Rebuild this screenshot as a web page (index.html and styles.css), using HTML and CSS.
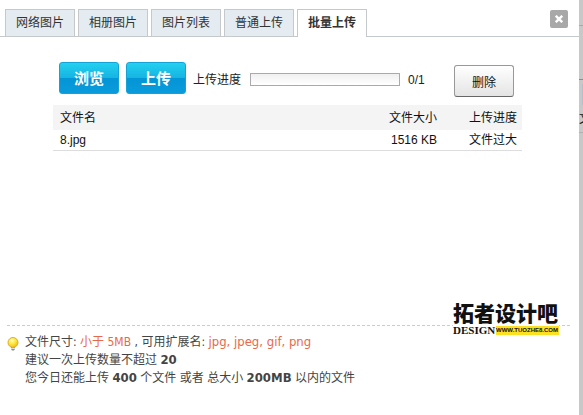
FILE: index.html
```
<!DOCTYPE html>
<html lang="zh-CN">
<head>
<meta charset="UTF-8">
<meta name="viewport" content="width=device-width, initial-scale=1">
<title>批量上传</title>
<link rel="stylesheet" href="styles.css">
</head>
<body>
<div class="page">
  <div class="dialog">
    <div class="tabs" role="tablist">
      <button type="button" class="tab" role="tab">网络图片</button>
      <button type="button" class="tab" role="tab">相册图片</button>
      <button type="button" class="tab" role="tab">图片列表</button>
      <button type="button" class="tab" role="tab">普通上传</button>
      <button type="button" class="tab active" role="tab" aria-selected="true">批量上传</button>
      <button type="button" class="close" aria-label="关闭">
        <svg width="8" height="8" viewBox="0 0 8 8"><path d="M.8 .8l6.4 6.4M7.2 .8l-6.4 6.4" stroke="#fff" stroke-width="2.4"/></svg>
      </button>
    </div>

    <div class="content">
      <div class="toolbar">
        <button type="button" class="btn-blue">浏览</button>
        <button type="button" class="btn-blue">上传</button>
        <span class="progress-label" id="progressLabel">上传进度</span>
        <div class="progress" role="progressbar" aria-labelledby="progressLabel" aria-valuenow="0"></div>
        <span class="count">0/1</span>
        <button type="button" class="btn-delete">删除</button>
      </div>

      <table class="files">
        <thead>
          <tr><th>文件名</th><th class="size">文件大小</th><th class="status">上传进度</th></tr>
        </thead>
        <tbody>
          <tr><td>8.jpg</td><td class="size">1516 KB</td><td class="status">文件过大</td></tr>
        </tbody>
      </table>
    </div>

    <div class="tips">
      <svg class="bulb" width="12" height="14" viewBox="0 0 12 14">
        <defs>
          <radialGradient id="glow" cx=".4" cy=".3" r=".7">
            <stop offset="0" stop-color="#fffbc0"/>
            <stop offset=".5" stop-color="#fde93a"/>
            <stop offset="1" stop-color="#f0b81c"/>
          </radialGradient>
        </defs>
        <path d="M4 9h4v3l-1 1.5H5L4 12z" fill="#8f8f80"/>
        <path d="M4 11.5h4" stroke="#ddd"/>
        <circle cx="6" cy="5.5" r="5" fill="url(#glow)" stroke="#dcae2c"/>
      </svg>
      <div class="tips-text">
        <p>文件尺寸: <span class="hot">小于 5MB</span> , 可用扩展名: <span class="hot ext">jpg, jpeg, gif, png</span></p>
        <p>建议一次上传数量不超过 <b>20</b></p>
        <p>您今日还能上传 <b>400</b> 个文件 或者 总大小 <b>200MB</b> 以内的文件</p>
      </div>
    </div>

    <div class="watermark">
      <div class="wm-name">拓者设计吧</div>
      <div class="wm-row"><span class="wm-design">DESIGN</span><span class="wm-url">WWW.TUOZHE8.COM</span></div>
    </div>
  </div>

  <div class="backdrop">
    <div class="behind-head"></div>
    <div class="behind-bar"></div>
    <div class="behind-row"><span class="behind-button"></span><span class="behind-text">文</span></div>
  </div>
</div>
</body>
</html>
```
FILE: styles.css
```
* {
  box-sizing: border-box;
}
body {
  margin: 0;
  background: #fff;
  color: #444;
  font: 12px/18px "DejaVu Sans Condensed", "Noto Sans CJK SC", sans-serif;
}
button {
  font-family: inherit;
  padding: 0;
  cursor: pointer;
}
.page {
  display: flex;
  min-height: 100vh;
}
.dialog {
  position: relative;
  flex: 1;
  display: flex;
  flex-direction: column;
}

/* page edge behind the dialog */
.backdrop {
  width: 4px;
  background: #c8c8c8;
  overflow: hidden;
}
.behind-head {
  height: 26px;
  border-bottom: 1px solid #a8a8a8;
}
.behind-bar {
  height: 54px;
  border-bottom: 1px solid #8c8c8c;
}
.behind-row {
  height: 53px;
  padding-top: 4px;
  border-bottom: 1px solid #b0b0b0;
}
.behind-button {
  display: block;
  height: 21px;
  margin-left: 3px;
  background: #b4bfca;
}
.behind-text {
  display: block;
  width: 12px;
  margin-top: 5px;
  color: #111;
}

/* tabs */
.tabs {
  display: flex;
  gap: 3px;
  height: 37px;
  padding: 9px 11px 0 5px;
  border-bottom: 1px solid #c6c9cb;
}
.tab {
  width: 70px;
  height: 27px;
  padding-bottom: 4px;
  border: 1px solid #c6c9cb;
  border-bottom: 0;
  background: #e4ebf1;
  color: #333;
  font-size: 12px;
}
.tab.active {
  height: 28px;
  background: #fff;
  font-weight: bold;
}
.close {
  display: flex;
  align-items: center;
  justify-content: center;
  width: 18px;
  height: 18px;
  margin: 1px 0 0 auto;
  border: 0;
  border-radius: 2px;
  background: #a8a8a8;
}

/* upload area */
.content {
  flex: 1;
  padding: 25px 57px 0 53px;
}
.toolbar {
  display: flex;
  align-items: center;
  height: 35px;
  padding: 0 8px 0 6px;
  color: #222;
}
.btn-blue {
  align-self: flex-start;
  width: 60px;
  height: 32px;
  margin-right: 7px;
  padding-bottom: 2px;
  border: 1px solid #14a3d6;
  border-radius: 3px;
  background: linear-gradient(#22d0ef, #16b4e2 50%, #0395d6 51%, #0a9bdb);
  color: #fff;
  font-size: 15px;
  font-weight: bold;
}
.progress {
  flex: 1;
  height: 13px;
  margin: 0 8px 0 9px;
  border: 1px solid #aaa;
  background: linear-gradient(#f0f0f0, #fff);
}
.count {
  width: 46px;
  font-family: "Liberation Sans", sans-serif;
}
.btn-delete {
  align-self: flex-end;
  width: 60px;
  height: 32px;
  border: 1px solid #999;
  border-bottom-color: #666;
  border-radius: 3px;
  background: linear-gradient(#fff, #e4e4e4);
  color: #111;
  font-size: 12px;
}
.files {
  width: 100%;
  margin-top: 8px;
  border-collapse: collapse;
  color: #111;
  font-family: "Liberation Sans", "Noto Sans CJK SC", sans-serif;
}
.files th {
  height: 25px;
  padding: 0 7px;
  background: #f4f4f4;
  font-weight: normal;
  text-align: left;
}
.files td {
  height: 20px;
  padding: 0 7px;
  border-bottom: 1px solid #ddd;
}
.files .size {
  padding-right: 5px;
  text-align: right;
}
.files .status {
  width: 80px;
  padding-right: 5px;
  text-align: right;
}

/* tips */
.tips {
  display: flex;
  gap: 6px;
  min-height: 90px;
  margin: 0 9px 0 7px;
  padding-top: 7px;
  border-top: 1px dashed #ccc;
}
.bulb {
  margin-top: 4px;
}
.tips p {
  margin: 0;
}
.tips b,
.ext {
  font-size: 13px;
}
.hot {
  color: #e8694a;
}

/* watermark */
.watermark {
  position: absolute;
  right: 20px;
  bottom: 80px;
  width: 106px;
}
.wm-name {
  margin-bottom: 2px;
  color: #111;
  font: 900 21px/21px "Noto Sans CJK SC", sans-serif;
  white-space: nowrap;
}
.wm-row {
  display: flex;
  align-items: center;
  height: 10px;
  background: #fff;
  white-space: nowrap;
}
.wm-design {
  width: 43px;
  color: #111;
  font: bold 11px/10px "Liberation Serif", serif;
}
.wm-url {
  flex: 1;
  background: #fbe122;
  color: #111;
  font: bold 6px/9px "Liberation Sans", sans-serif;
}
```
